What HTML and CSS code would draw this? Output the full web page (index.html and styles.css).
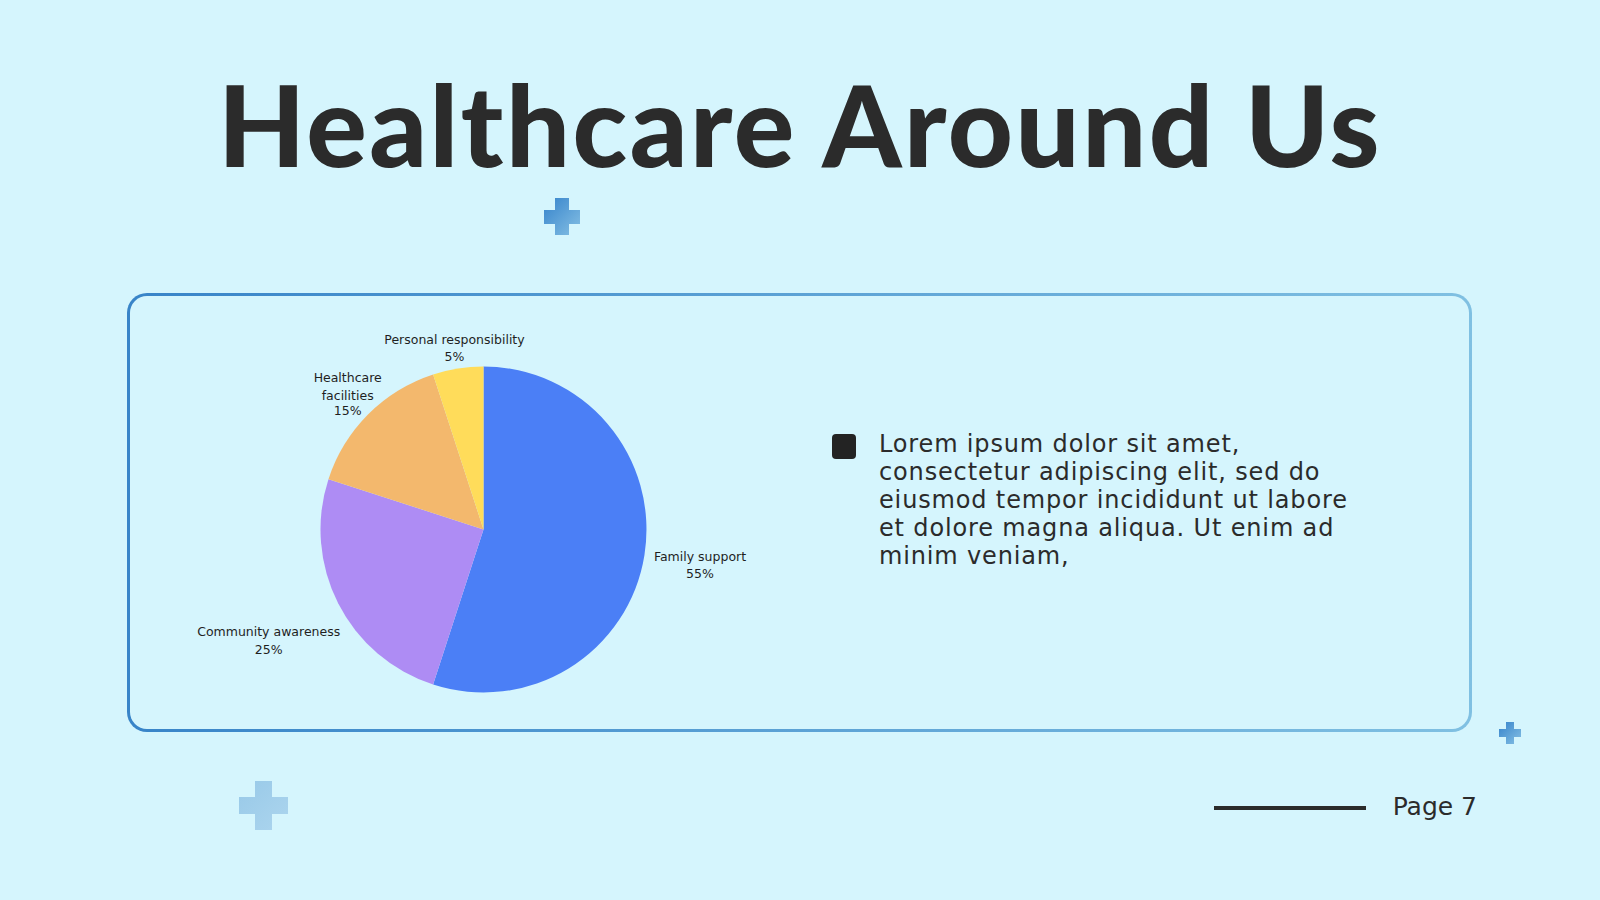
FILE: index.html
```html
<!DOCTYPE html>
<html lang="en">
<head>
<meta charset="utf-8">
<title>Healthcare Around Us</title>
<link rel="stylesheet" href="styles.css">
</head>
<body>
<div class="slide">
  <h1 class="title">Healthcare Around Us</h1>

  <svg class="cross cross-top" viewBox="0 0 36 37" aria-hidden="true">
    <defs>
      <linearGradient id="gTop" x1="0" y1="0" x2="1" y2="1">
        <stop offset="0" stop-color="#3583cb"/>
        <stop offset="1" stop-color="#86c0e4"/>
      </linearGradient>
    </defs>
    <path d="M11 0H25V12H36V26H25V37H11V26H0V12H11Z" fill="url(#gTop)"/>
  </svg>

  <section class="card">
    <svg class="chart" viewBox="0 0 680 433" aria-label="Pie chart">
      <path d="M353.5 233.5 L353.5 70.5 A163 163 0 1 1 303.13 388.53 Z" fill="#4b7ff6"/>
      <path d="M353.5 233.5 L303.13 388.53 A163 163 0 0 1 198.47 183.13 Z" fill="#ae8cf4"/>
      <path d="M353.5 233.5 L198.47 183.13 A163 163 0 0 1 303.13 78.47 Z" fill="#f3b86d"/>
      <path d="M353.5 233.5 L303.13 78.47 A163 163 0 0 1 353.5 70.5 Z" fill="#ffdc5a"/>
      <g class="lbl">
        <text x="324.5" y="48">Personal responsibility</text>
        <text x="324.5" y="65">5%</text>
        <text x="217.7" y="86">Healthcare</text>
        <text x="217.7" y="104">facilities</text>
        <text x="217.7" y="119">15%</text>
        <text x="570" y="265">Family support</text>
        <text x="570" y="282">55%</text>
        <text x="138.7" y="340">Community awareness</text>
        <text x="138.7" y="358">25%</text>
      </g>
    </svg>
    <div class="bullet">
      <span class="mark"></span>
      <p class="bullet-text">Lorem ipsum dolor sit amet,<br>consectetur adipiscing elit, sed do<br>eiusmod tempor incididunt ut labore<br>et dolore magna aliqua. Ut enim ad<br>minim veniam,</p>
    </div>
  </section>

  <svg class="cross cross-right" viewBox="0 0 22 22" aria-hidden="true">
    <defs>
      <linearGradient id="gRight" x1="0" y1="0" x2="1" y2="1">
        <stop offset="0" stop-color="#3583cb"/>
        <stop offset="1" stop-color="#86c0e4"/>
      </linearGradient>
    </defs>
    <path d="M7 0H15V7H22V15H15V22H7V15H0V7H7Z" fill="url(#gRight)"/>
  </svg>

  <svg class="cross cross-bottom" viewBox="0 0 49 49" aria-hidden="true">
    <defs>
      <linearGradient id="gBottom" x1="0" y1="0" x2="1" y2="1">
        <stop offset="0" stop-color="#98c9e8"/>
        <stop offset="1" stop-color="#acd5ee"/>
      </linearGradient>
    </defs>
    <path d="M16 0H33V16H49V33H33V49H16V33H0V16H16Z" fill="url(#gBottom)"/>
  </svg>

  <footer class="footer">
    <span class="rule"></span>
    <span class="page">Page 7</span>
  </footer>
</div>
</body>
</html>
```

FILE: styles.css
```css
html, body {
  margin: 0;
  padding: 0;
}

body {
  background: #d5f5fd;
  color: #2b2b2b;
  font-family: "DejaVu Sans", "Noto Sans", sans-serif;
}

.slide {
  position: relative;
  width: 1600px;
  height: 900px;
  overflow: hidden;
}

.title {
  margin: 0;
  padding-top: 67px;
  font-family: Lato, "Noto Sans", sans-serif;
  font-weight: 900;
  font-size: 113px;
  line-height: 113px;
  text-align: center;
  color: #2b2b2b;
  letter-spacing: 2.5px;
}

.cross {
  position: absolute;
  display: block;
}

.cross-top {
  left: 544px;
  top: 198px;
  width: 36px;
  height: 37px;
}

.cross-right {
  left: 1499px;
  top: 722px;
  width: 22px;
  height: 22px;
}

.cross-bottom {
  left: 239px;
  top: 781px;
  width: 49px;
  height: 49px;
}

.card {
  box-sizing: border-box;
  margin: 113px 0 0 127px;
  width: 1345px;
  height: 439px;
  border: 3px solid transparent;
  border-radius: 20px;
  background:
    linear-gradient(#d5f5fd, #d5f5fd) padding-box,
    linear-gradient(90deg, #3884c8, #80c0e2) border-box;
  display: flex;
  align-items: flex-start;
}

.chart {
  display: block;
  width: 680px;
  height: 433px;
  flex: none;
}

.lbl text {
  font-family: "DejaVu Sans", "Noto Sans", sans-serif;
  font-size: 12.5px;
  fill: #1f1f1f;
  text-anchor: middle;
}

.bullet {
  display: flex;
  gap: 23px;
  margin: 134px 0 0 22px;
}

.mark {
  flex: none;
  width: 24px;
  height: 25px;
  margin-top: 4px;
  border-radius: 4px;
  background: #232323;
}

.bullet-text {
  margin: 0;
  font-size: 24px;
  line-height: 28px;
  letter-spacing: 0.85px;
  color: #2b2b2b;
}

.footer {
  display: flex;
  align-items: center;
  justify-content: flex-end;
  gap: 27px;
  margin-top: 60px;
  padding-right: 123px;
  height: 30px;
}

.rule {
  display: block;
  width: 152px;
  height: 4px;
  background: #2b2b2b;
  margin-top: 2px;
}

.page {
  font-size: 25px;
  line-height: 30px;
  color: #2b2b2b;
}
```
